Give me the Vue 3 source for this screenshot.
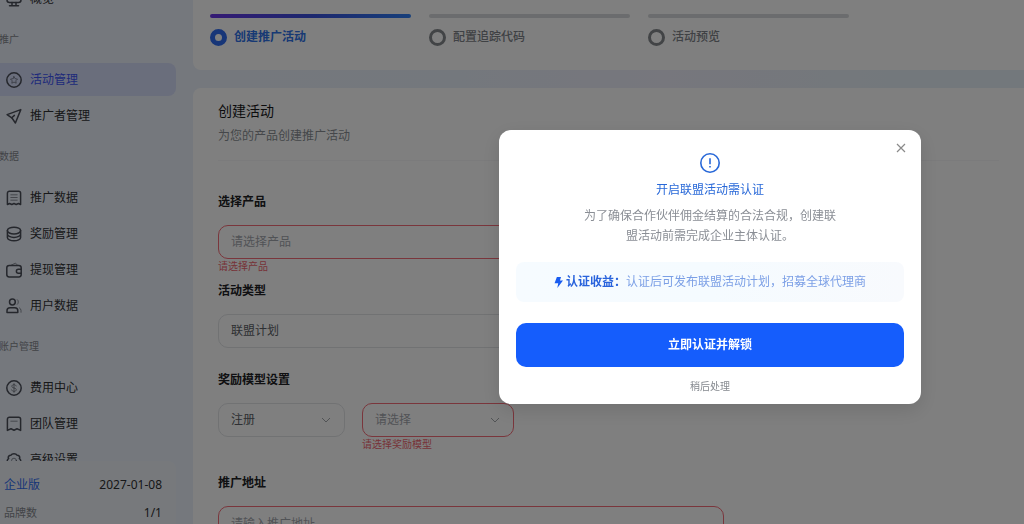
<script setup>
import { ref } from 'vue'

const groups = [
  { title: '', items: [{ name: '概览', icon: 'monitor' }] },
  {
    title: '推广',
    items: [
      { name: '活动管理', icon: 'star', active: true },
      { name: '推广者管理', icon: 'send' },
    ],
  },
  {
    title: '数据',
    items: [
      { name: '推广数据', icon: 'receipt' },
      { name: '奖励管理', icon: 'coins' },
      { name: '提现管理', icon: 'wallet' },
      { name: '用户数据', icon: 'users' },
    ],
  },
  {
    title: '账户管理',
    items: [
      { name: '费用中心', icon: 'dollar' },
      { name: '团队管理', icon: 'bookmark' },
      { name: '高级设置', icon: 'gear' },
    ],
  },
]

const icons = {
  monitor: '<rect x="1" y="1" width="14" height="10.500" rx="2.500"/><path d="M6 11.500v3M10 11.500v3M3.500 14.800h9"/>',
  star: '<circle cx="8" cy="8" r="7.200"/><path class="thin" d="M8 4.600l1.100 2.100 2.400.4-1.700 1.700.4 2.400L8 10.100l-2.200 1.100.4-2.400-1.700-1.700 2.400-.4z"/>',
  send: '<path d="M14.800 1.600L1.100 6.600l4.700 3.200 3.600 5.200z"/><path d="M5.800 9.800l2.600-2.400"/>',
  receipt: '<path d="M1.400 14.500V3.300a2 2 0 0 1 2-2h9.200a2 2 0 0 1 2 2v11.200l-2.200-1-2.200 1-2.200-1-2.200 1-2.200-1z"/><path class="thin" d="M4.800 4.800h6.400M4.800 7.500h6.400M4.800 10.200h6.400"/>',
  coins: '<ellipse cx="8" cy="4.600" rx="6.600" ry="3.400"/><path d="M1.400 4.600v6.800c0 1.900 3 3.400 6.600 3.400s6.600-1.500 6.600-3.400V4.600M1.400 8c0 1.900 3 3.400 6.600 3.400s6.600-1.500 6.600-3.400"/>',
  wallet: '<rect x="0.800" y="3.400" width="14.400" height="11.600" rx="2.400"/><path d="M15.200 7.200h-2.800a2 2 0 0 0 0 4h2.800"/><path class="thin" d="M5 3.200l4.500-2.100 2 2.100"/>',
  users: '<circle cx="6.400" cy="4" r="2.900"/><path d="M1 14.600v-1.800a3 3 0 0 1 3-3h4.800a3 3 0 0 1 3 3v1.800z"/><path class="thin" d="M11.300 1.600a3 3 0 0 1 0 4.800M13.400 9.800a3 3 0 0 1 1.600 2.700v1.800"/>',
  dollar: '<circle cx="8" cy="8" r="7.200"/><path class="thin" d="M10.200 6c-.3-.9-1.100-1.300-2.200-1.300-1.300 0-2.200.6-2.200 1.600 0 2.300 4.500 1.100 4.500 3.400 0 1-.9 1.600-2.300 1.600-1.200 0-2.100-.5-2.400-1.400M8 3.600v8.800"/>',
  bookmark: '<path d="M1.400 14.400V3.300a2 2 0 0 1 2-2h9.200a2 2 0 0 1 2 2v11.100L11 12.800l-3 1.400-3-1.400z"/><path class="thin" d="M4.800 5.200h6.400"/>',
  gear: '<path d="M5 3.200C6 1.300 10 1.300 11 3.200c2.100-.2 3.300 1.900 2.400 3.400 1.800 1 1.800 3.200 0 4.200.6 1.700-.7 3.200-2.600 3-1 1.700-4.600 1.700-5.600 0-1.900.2-3.200-1.300-2.600-3-1.800-1-1.800-3.200 0-4.200C1.700 5.100 2.900 3 5 3.200z"/><circle class="thin" cx="8" cy="8.600" r="2.400"/>',
}

const steps = ['创建推广活动', '配置追踪代码', '活动预览']
const dialogOpen = ref(true)
</script>

<template>
  <div class="page">
    <aside class="sidebar">
      <nav class="nav" aria-label="主导航">
        <section v-for="(g, i) in groups" :key="i">
          <h2 v-if="g.title" class="group-title">{{ g.title }}</h2>
          <ul class="nav-list">
            <li v-for="item in g.items" :key="item.name">
              <a href="#" class="nav-item" :class="{ active: item.active }">
                <svg viewBox="0 0 16 16" class="nav-icon" aria-hidden="true" v-html="icons[item.icon]"></svg>
                <span>{{ item.name }}</span>
              </a>
            </li>
          </ul>
        </section>
      </nav>
      <div class="plan">
        <div class="plan-row"><a href="#" class="plan-name">企业版</a><span>2027-01-08</span></div>
        <div class="plan-row"><span class="muted">品牌数</span><span>1/1</span></div>
      </div>
    </aside>

    <main class="main">
      <section class="card steps-card">
        <ol class="steps">
          <li v-for="(s, i) in steps" :key="s" class="step" :class="{ current: i === 0 }">
            <div class="bar"></div>
            <div class="step-label"><i class="dot"></i>{{ s }}</div>
          </li>
        </ol>
      </section>

      <section class="card form-card">
        <header class="form-head">
          <h1>创建活动</h1>
          <p>为您的产品创建推广活动</p>
        </header>
        <form class="form" @submit.prevent>
          <div class="field">
            <label for="product">选择产品</label>
            <div class="select invalid placeholder">
              <select id="product"><option>请选择产品</option></select>
              <svg viewBox="0 0 10 6" aria-hidden="true"><path d="M1 1l4 4 4-4" /></svg>
            </div>
            <p class="error">请选择产品</p>
          </div>
          <div class="field">
            <label for="type">活动类型</label>
            <div class="select">
              <select id="type"><option>联盟计划</option></select>
              <svg viewBox="0 0 10 6" aria-hidden="true"><path d="M1 1l4 4 4-4" /></svg>
            </div>
            <p class="error"></p>
          </div>
          <div class="field">
            <label for="event">奖励模型设置</label>
            <div class="model-row">
              <div class="select event">
                <select id="event"><option>注册</option></select>
                <svg viewBox="0 0 10 6" aria-hidden="true"><path d="M1 1l4 4 4-4" /></svg>
              </div>
              <div class="model">
                <div class="select invalid placeholder">
                  <select aria-label="奖励模型"><option>请选择</option></select>
                  <svg viewBox="0 0 10 6" aria-hidden="true"><path d="M1 1l4 4 4-4" /></svg>
                </div>
                <p class="error">请选择奖励模型</p>
              </div>
            </div>
          </div>
          <div class="field address">
            <label for="url">推广地址</label>
            <input id="url" class="text-input" type="text" placeholder="请输入推广地址" />
          </div>
        </form>
      </section>
    </main>

    <div v-if="dialogOpen" class="overlay">
      <div class="dialog" role="dialog" aria-modal="true" aria-labelledby="dialog-title">
        <button class="close" type="button" aria-label="关闭" @click="dialogOpen = false">
          <svg viewBox="0 0 10 10" aria-hidden="true"><path d="M1 1l8 8M9 1L1 9" /></svg>
        </button>
        <svg class="alert-icon" viewBox="0 0 20 20" aria-hidden="true">
          <circle cx="10" cy="10" r="9.200" />
          <path d="M10 5.200v6M10 13v1.600" />
        </svg>
        <h2 id="dialog-title">开启联盟活动需认证</h2>
        <p class="desc">为了确保合作伙伴佣金结算的合法合规，创建联盟活动前需完成企业主体认证。</p>
        <p class="benefit">
          <svg viewBox="0 0 10 12" aria-hidden="true"><path d="M3.200 0h4.600L6.600 3.900H10L3.700 12l1-5.200H.6z" /></svg>
          <strong>认证收益：</strong><span>认证后可发布联盟活动计划，招募全球代理商</span>
        </p>
        <button class="primary" type="button">立即认证并解锁</button>
        <button class="later" type="button" @click="dialogOpen = false">稍后处理</button>
      </div>
    </div>
  </div>
</template>

<style>
body {
  margin: 0;
  overflow: hidden;
}
</style>

<style scoped>
.page {
  display: flex;
  height: 100vh;
  overflow: hidden;
  background: linear-gradient(90deg, #ebf1fb 0%, #e9f0fb 45%, #eeeefa 65%, #e6f1f8 90%);
  color: #303133;
  font: 12px/20px "Noto Sans", "Noto Sans CJK SC", sans-serif;
}
.page *, .page *::before { box-sizing: border-box; }
h1, h2, p, ul, ol { margin: 0; padding: 0; list-style: none; font-weight: 400; }
button, input, select { font: inherit; }

.sidebar {
  display: flex;
  flex: none;
  flex-direction: column;
  width: 193px;
  padding-right: 17px;
}
.nav { flex: 1; min-height: 0; overflow: hidden; }
/* the list is scrolled so that the overview entry is partly out of view */
.nav section:first-child { margin-top: -18px; }
.group-title { font-size: 10px; line-height: 49px; color: #85888f; margin-left: -1px; }
.nav section:nth-child(2) .group-title { line-height: 48px; }
.nav-list { display: grid; gap: 3px; }
.nav-item {
  display: flex;
  align-items: center;
  gap: 8px;
  height: 33px;
  padding-left: 6px;
  border-radius: 0 8px 8px 0;
  color: inherit;
  text-decoration: none;
}
.nav-item.active { background: #d5dcf9; }
.nav-item.active span { color: #3d55f5; }
.nav-icon { width: 16px; height: 16px; overflow: visible; fill: none; stroke: #4a4e59; stroke-width: 1.5; stroke-linejoin: round; stroke-linecap: round; }
.nav-icon :deep(.thin) { stroke-width: 1; opacity: .6; }
.plan { flex: none; height: 63px; overflow: hidden; padding: 10px 14px 0 4px; border-radius: 0 8px 0 0; background: #eff3f9; }
.plan-row { display: flex; justify-content: space-between; height: 28px; line-height: 28px; }
.plan-name { color: #2f6bf0; text-decoration: none; }
.muted { color: #85888f; font-size: 11px; }

.main { flex: 1; min-width: 0; }
.card { background: #fff; }
.steps-card { padding: 14px 17px 23px; border-radius: 0 0 0 8px; }
.steps { display: flex; gap: 18px; }
.step { flex: 0 1 201px; color: #7f8389; font-weight: 500; }
.bar { height: 4px; margin-bottom: 9px; border-radius: 2px; background: #d6d9dc; }
.step-label { display: flex; align-items: center; gap: 7px; white-space: nowrap; }
.dot { width: 17px; height: 17px; border: 3px solid #85898d; border-radius: 50%; }
.current { color: #2f73e8; font-weight: 700; }
.current .bar { background: linear-gradient(90deg, #6a35e8, #3a50dc 50%, #2f7ff5); }
.current .dot { border-width: 5px; border-color: #2f6cf0; }

.form-card { margin-top: 18px; padding: 12px 25px 40px; border-radius: 8px 0 0 0; }
.form-head { padding-bottom: 14px; border-bottom: 1px solid #f7f7f8; }
.form-head h1 { font-size: 14px; line-height: 22px; color: #18191b; }
.form-head p { margin-top: 4px; line-height: 20px; color: #8a8f94; }
.form { max-width: 506px; padding-top: 31px; }
.field label { display: block; margin-bottom: 13px; font-weight: 700; color: #202124; }
.select { position: relative; }
.select select, .text-input {
  display: block;
  width: 100%;
  height: 34px;
  padding: 0 12px;
  border: 1px solid #e2e4e7;
  border-radius: 10px;
  outline: none;
  appearance: none;
  background: transparent;
  color: #5c5f66;
}
.select svg { position: absolute; right: 14px; top: 14px; width: 10px; height: 6px; fill: none; stroke: #a3a6ab; stroke-width: 1; }
.invalid select, .text-input { border-color: #f56c78; }
.placeholder select { color: #a3a6ad; }
.text-input::placeholder { color: #a3a6ad; opacity: 1; }
.error { height: 22px; font-size: 10px; line-height: 14px; color: #ee6670; }
.model-row { display: flex; gap: 17px; }
.event { flex: 0 1 127px; }
.model { flex: 0 1 152px; }
.address { margin-top: 14px; }

.overlay {
  position: fixed;
  inset: 0;
  display: flex;
  align-items: center;
  justify-content: flex-end;
  padding: 10px 103px 0 16px;
  background: rgba(0, 0, 0, .5);
}
.dialog {
  position: relative;
  display: flex;
  flex-direction: column;
  align-items: center;
  width: 100%;
  max-width: 422px;
  padding: 23px 17px 8px;
  border-radius: 12px;
  background: #fff;
  box-shadow: 0 6px 20px rgba(0, 0, 0, .12);
}
.close { position: absolute; top: 8px; right: 10px; display: grid; place-items: center; width: 20px; height: 20px; padding: 0; border: 0; background: none; }
.close svg { width: 10px; height: 10px; stroke: #8a8a8a; stroke-width: 1.2; }
.alert-icon { width: 20px; height: 20px; fill: none; stroke: #2868d8; stroke-width: 1.6; }
.dialog h2 { margin-top: 7px; font-size: 12px; line-height: 20px; color: #2868d8; }
.desc { max-width: 252px; margin-top: 6px; color: #8a8e95; text-align: center; }
.benefit {
  display: flex;
  align-items: center;
  justify-content: center;
  width: 100%;
  height: 40px;
  margin-top: 16px;
  border-radius: 8px;
  background: linear-gradient(90deg, #f6fbff, #f5fbff 50%, #f8fafd);
  color: #7b9fe6;
  white-space: nowrap;
}
.benefit svg { width: 9px; height: 11px; margin-right: 3px; fill: #1a5cf0; }
.benefit strong { color: #2862dc; }
.primary { width: 100%; height: 44px; margin-top: 21px; border: 0; border-radius: 10px; background: #155dfc; color: #fff; font-weight: 700; }
.later { height: 20px; margin-top: 9px; padding: 0 8px; border: 0; background: none; color: #85898f; font-size: 10px; }
</style>
